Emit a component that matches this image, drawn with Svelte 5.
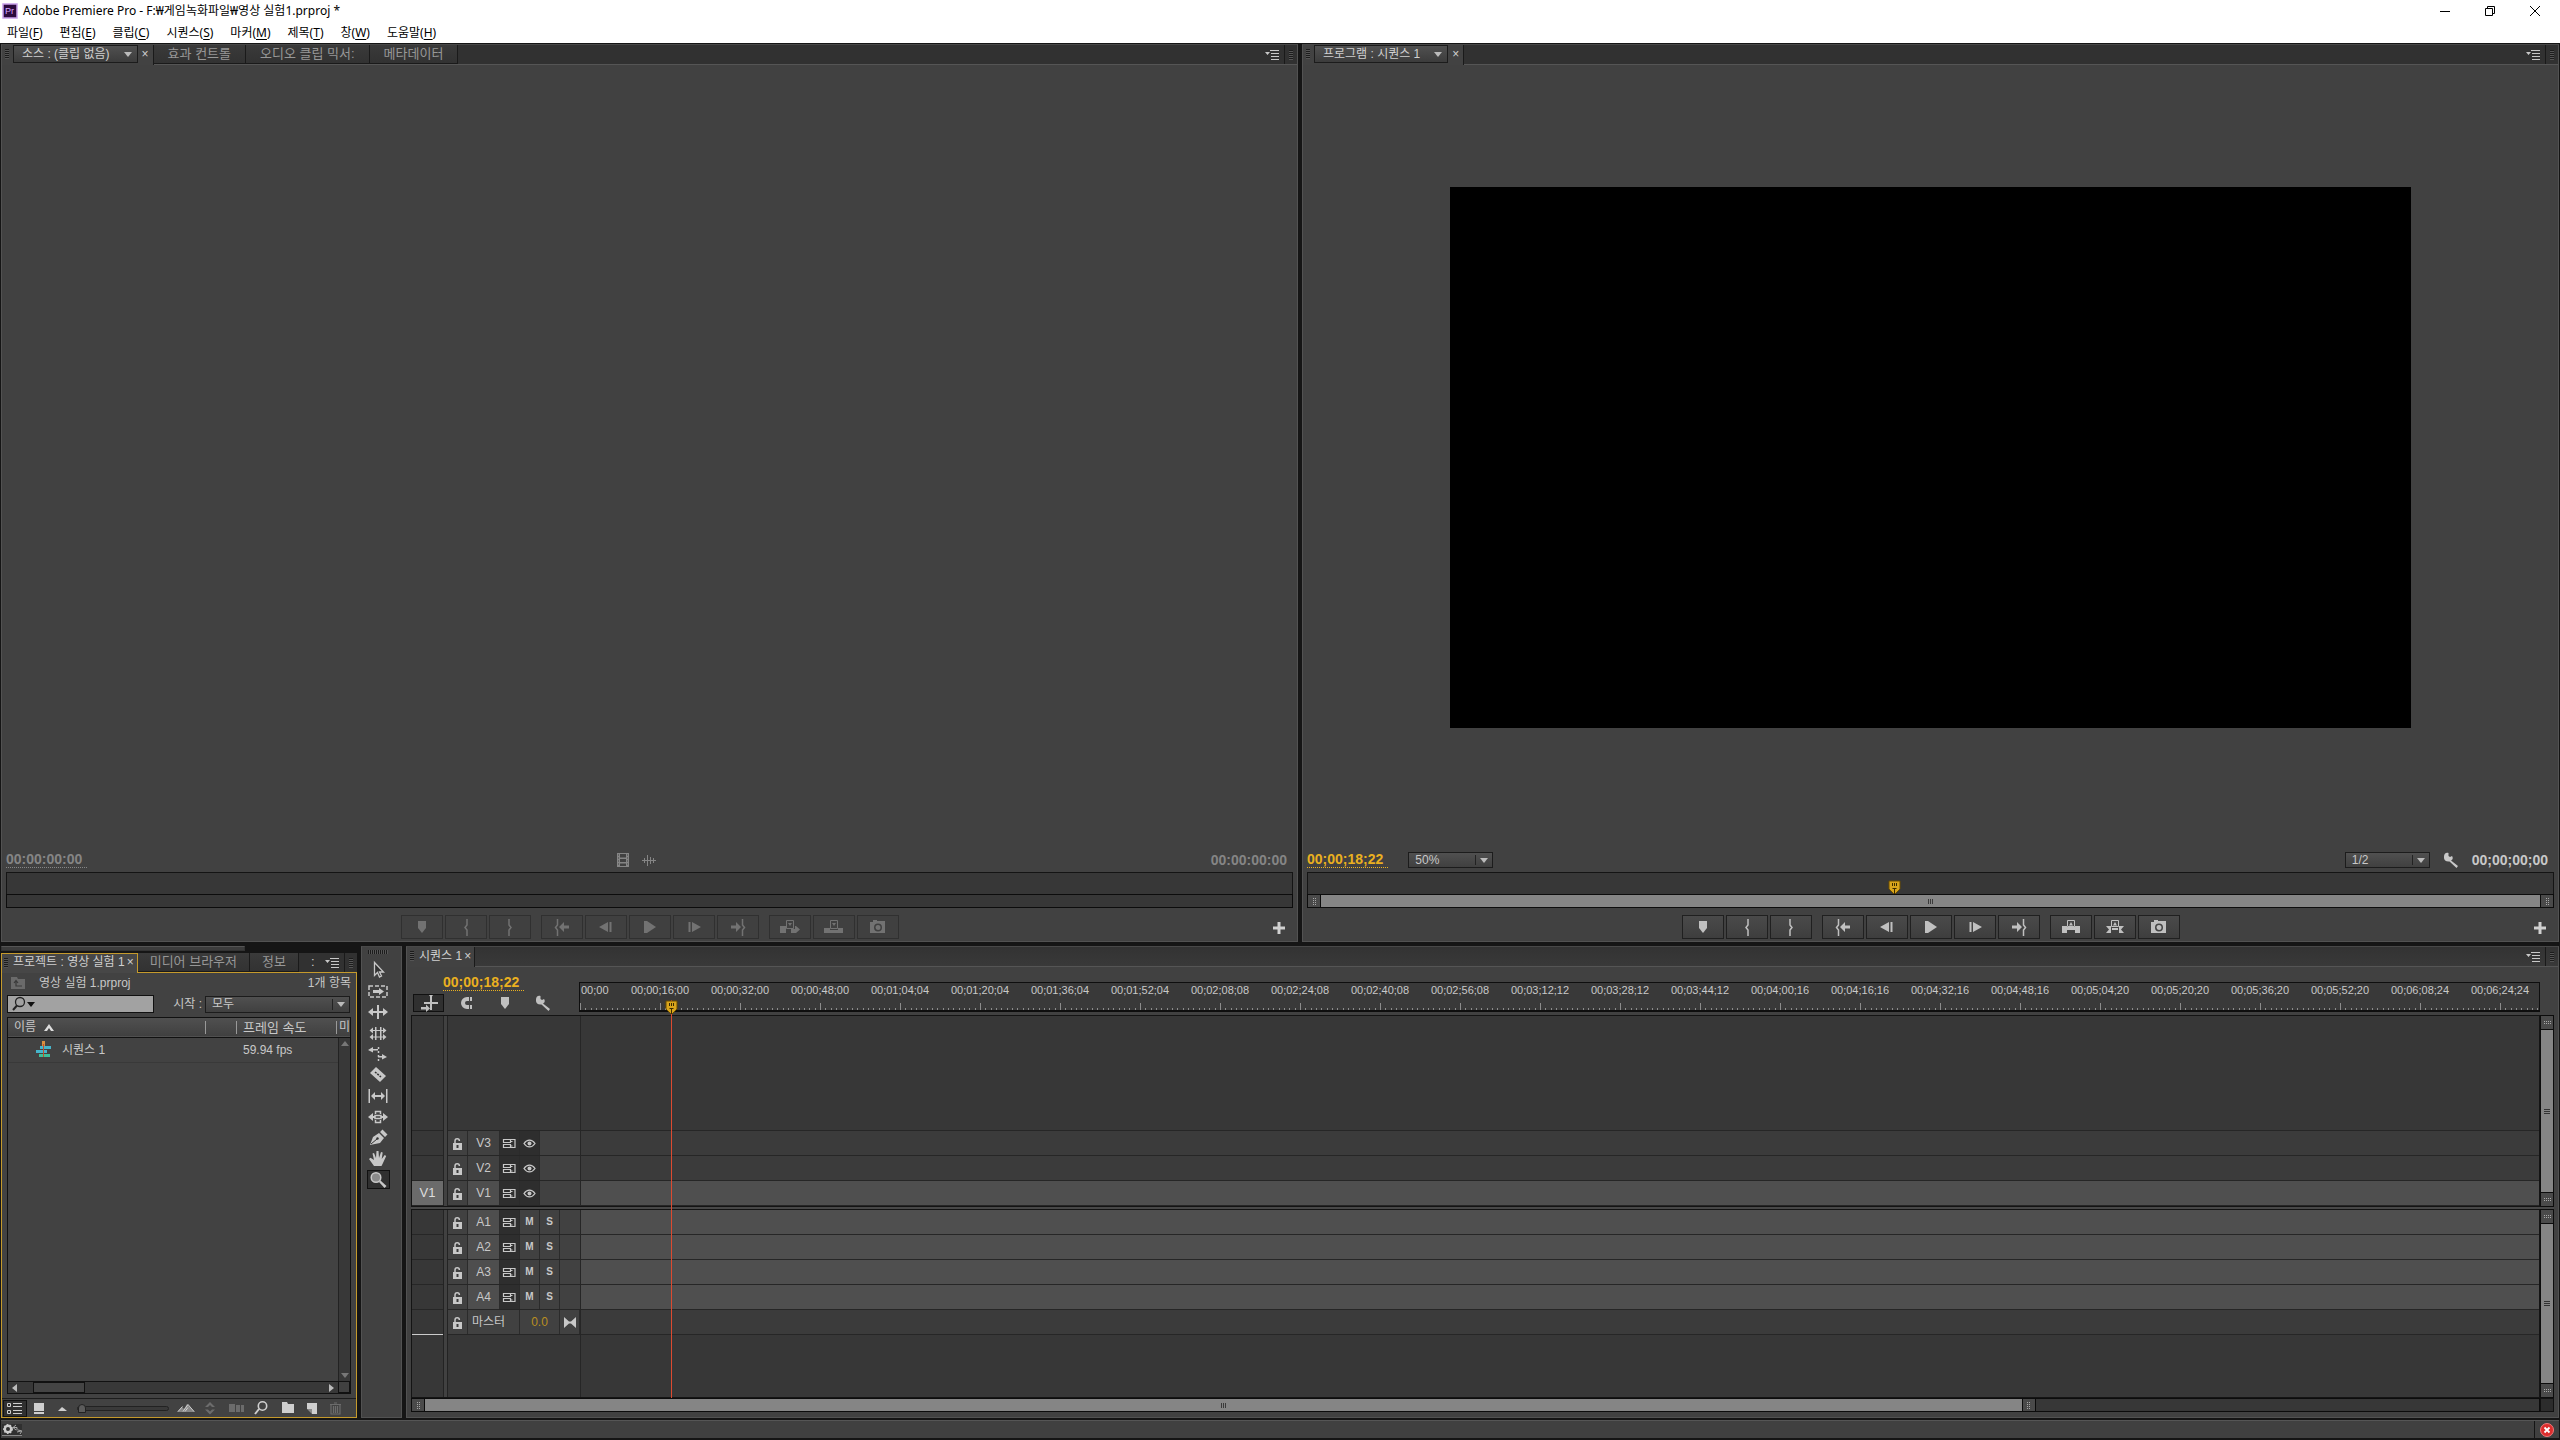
<script>
  const menus = [
    ['파일', 'F'], ['편집', 'E'], ['클립', 'C'], ['시퀀스', 'S'],
    ['마커', 'M'], ['제목', 'T'], ['창', 'W'], ['도움말', 'H'],
  ];

  const icons = {
    marker: '<path d="M7 5h8v7l-4 5-4-5z"/>',
    markIn: '<path d="M12 3v6l-2 2.500 2 2.500v6" fill="none" stroke="currentColor" stroke-width="1.500"/>',
    markOut: '<path d="M10 3v6l2 2.500-2 2.500v6" fill="none" stroke="currentColor" stroke-width="1.500"/>',
    goIn: '<path d="M6.500 3v6l-2 2.500 2 2.500v6" fill="none" stroke="currentColor" stroke-width="1.500"/><path d="M8 11l5-5v3.500h5v3h-5V16z"/>',
    stepBack: '<path d="M13 6v10L4 11zM14.500 6h2v10h-2z"/>',
    play: '<path d="M5 5l3 0 9 6-9 6H5z"/>',
    stepFwd: '<path d="M9 6v10l9-5zM5.500 6h2v10h-2z"/>',
    goOut: '<path d="M15.500 3v6l2 2.500-2 2.500v6" fill="none" stroke="currentColor" stroke-width="1.500"/><path d="M14 11L9 6v3.500H4v3h5V16z"/>',
    insert: '<path d="M1 10h6v7H1zM12 13h4v4h-4z"/><path d="M7.500 4.500h7v8h-7z" fill="none" stroke="currentColor"/><path d="M9 7h4l-2 3zM16 10h1l4 3.500-4 3.500h-1z"/>',
    overwrite: '<path d="M1 12h6v2h8v-2h5v5H1z"/><path d="M7.500 4.500h7v8h-7z" fill="none" stroke="currentColor"/><path d="M9 7h4l-2 3z"/>',
    lift: '<path d="M2 10h5v7H2zM15 10h5v7h-5zM7 11h8v3H7z"/><path d="M7.500 4.500h7v6h-7z" fill="none" stroke="currentColor"/><path d="M9 9.500h4L11 6z"/>',
    extract: '<path d="M2 10h5v7H2l3-3.500zM20 10h-5v7h5l-3-3.500z"/><path d="M7.500 4.500h7v6h-7z" fill="none" stroke="currentColor"/><path d="M9 9.500h4L11 6zM8 12h6v2H8z"/>',
    camera: '<path fill-rule="evenodd" d="M3 6h3V4h4v1h8v12H3zM11 7.500a4 4 0 1 0 0 8 4 4 0 0 0 0-8zm0 1.500a2.500 2.500 0 1 1 0 5 2.500 2.500 0 0 1 0-5z"/>',
    film: '<path fill-rule="evenodd" d="M5 4h12v14H5zm3 1v3.500h6V5zm0 5v3h6v-3zm0 4.500V17h6v-2.500zM6 5.500v1h1v-1zm0 3v1h1v-1zm0 3v1h1v-1zm0 3v1h1v-1zm9-9v1h1v-1zm0 3v1h1v-1zm0 3v1h1v-1zm0 3v1h1v-1z"/>',
    wave: '<path d="M4 11.500h14M6.500 9v5M9.500 6v11M12.500 8v7M15.500 9v5" stroke="currentColor" fill="none"/>',
    wrench: '<path d="M4 7.500C4 5 6 3 8.500 4v3l1.500 1 2-1c1.500 2 .5 4-1 4.500l7 5.500-1.500 2-7-6.500C6 13 4 11 4 9z"/>',
    plus: '<path d="M9.500 5h3v4.500H17v3h-4.500V17h-3v-4.500H5v-3h4.500z"/>',
    panelMenu: '<path d="M3 8h5l-2.500 3zM8 6h9v1H8zM9 9h8v1H9zM9 12h8v1H9zM9 15h8v1H9z"/>',
    select: '<path d="M7.500 3.500v13l3-3 2 4.500 2-1-2-4h4z" fill="#333" stroke="currentColor" stroke-width="1.300"/>',
    trackSelect: '<path d="M2 6h18v11H2z" fill="none" stroke="currentColor" stroke-width="1.500" stroke-dasharray="4 2"/><path d="M6 10h6V8l5 3.500-5 3.500v-2H6z"/>',
    ripple: '<path d="M10 4h2v14h-2zM1 11l5-4v3h10V7l5 4-5 4v-3H6v3z"/>',
    rolling: '<path d="M8 5h1.500v13H8zM13 5h1.500v13H13zM2.500 8.500L6 5.500V8h10V5.500l3.500 3-3.500 3V9H6v2.500zM2.500 15L6 12v2.500h10V12l3.500 3-3.500 3v-2.500H6V18z"/>',
    rate: '<path d="M1 7l5-3v2h5v1.500H6v2zM20 14l-5-3v2h-4v1.500h4v2z"/><path d="M11.500 4v14" stroke="currentColor" stroke-width="1.500" stroke-dasharray="2 2"/>',
    razor: '<path d="M3 9l6-6 10 9-6 6z"/><path d="M8 8l6 5" stroke="#333" stroke-width="1.500" stroke-dasharray="2 1"/>',
    slip: '<path d="M1.500 4h1.500v14H1.500zM19 4h1.500v14H19zM4 11l4-4v3h6V7l4 4-4 4v-3H8v3z"/>',
    slide: '<path d="M1 11l5-4v3h2v2H6v3zM21 11l-5-4v3h-2v2h2v3z"/><path d="M8.500 8V5.500h5V8M8.500 14v2.500h5V14M8 9.500h6v3H8z" fill="none" stroke="currentColor" stroke-width="1.500"/>',
    pen: '<path d="M3 18l3-8 6-4 5 5-4 5zM13 5l2.500-2.500 5 5L18 10z"/><path d="M4 17l6-5" stroke="#333"/><circle cx="10.500" cy="11.500" r="1.200" fill="#333"/>',
    hand: '<path d="M7 18l-5-7 1.500-1.200L7 12 5.500 5.500 7 5l2 5 .5-7h2l.5 7 2-6 1.700.5-1 6.500 3-4 1.500 1-3.200 7-1.500 3z"/>',
    zoom: '<circle cx="9" cy="8.500" r="4.800" fill="#8a8a8a" stroke="currentColor" stroke-width="1.500"/><path d="M12 13l1.500-1.500 6 5.500-2 2z"/>',
    nest: '<path d="M12 4h2v14h-2zM6 10h14v2H6zM3 15h5v-2.500l4 4-4 3.500v-2.500H3z"/><path d="M11 3h4l-2 3z"/>',
    magnet: '<path d="M16 5h-5a6 6 0 0 0 0 12h5v-4h-5a2 2 0 0 1 0-4h5z"/><path d="M13.500 4v6M13.500 12v6" stroke="#444"/>',
    lock: '<path d="M6 11h9v7H6z"/><path d="M8 11V9a2.200 2.200 0 0 1 4.400 0" fill="none" stroke="currentColor" stroke-width="1.500"/><path d="M9.500 13h2v3h-2z" fill="#3a3a3a"/>',
    sync: '<path d="M4.500 7.500h7v3h-7zM4.500 12.500h7v3h-7zM12 7.500h4v8h-4M11.500 9.500h2M11.500 14h2" fill="none" stroke="currentColor" stroke-width="1.200"/>',
    eye: '<path d="M5 11.500c3-4.500 8-4.500 11 0-3 4.500-8 4.500-11 0z" fill="none" stroke="currentColor" stroke-width="1.300"/><circle cx="10.500" cy="11.500" r="2" />',
    bow: '<path d="M5 6l5 4.500h2L17 6v11l-5-4.500h-2L5 17z"/>',
    up: '<path d="M4 5h6l1 2h7v10H4z" fill="#6a6a6a"/><path d="M15 14H9V9.500M7 11l2-2.500 2 2.500" fill="none" stroke="#3a3a3a" stroke-width="1.200"/>',
    sequence: '<path d="M9 2h3v5H9z" fill="#d9903f"/><path d="M7 7h11v3H7zM3 11h11v3H3z" fill="#45b5cc"/><path d="M6 15h11v3H6z" fill="#3dbf9a"/><path d="M10.500 5v13" stroke="#c0532c"/>',
    list: '<path d="M3.500 6.500h3v3h-3zM3.500 13.500h3v3h-3z" fill="none" stroke="currentColor"/><path d="M9 6.500h9M9 9.500h9M9 13.500h9M9 16.500h9" stroke="currentColor"/>',
    thumb: '<path d="M6 6h10v8H6zM6 15h10v2H6z"/>',
    hillS: '<path d="M6 14l4-4 2 1.500 3 2.500z"/>',
    hillL: '<path d="M2 15l5-5 2 2 3-5 8 8z" fill="#888"/><path d="M3 14.500l4.500-5M8 14.500l5-7 6 7M10 14.500l3-4" stroke="currentColor" fill="none"/>',
    sort: '<path d="M6 10l5-5 5 5h-3l-2-2-2 2zM6 12.500l5 5 5-5h-3l-2 2-2-2z" fill="#6c6c6c"/>',
    auto: '<path d="M3 7h6v8H3zM10 8h4v7h-4zM15 8h3v7h-3z" fill="#6c6c6c"/>',
    find: '<circle cx="12.500" cy="9" r="4.200" fill="none" stroke="currentColor" stroke-width="1.600"/><path d="M9 12l-4 5" stroke="currentColor" stroke-width="2"/>',
    folder: '<path d="M5 5h5l1 2h6v9H5z"/>',
    newItem: '<path d="M6 6h10v11h-5v-5H6z"/><path d="M6 12l5 5v-5z" fill="#8a8a8a"/>',
    trash: '<path d="M6 8v9h9V8M8.500 9v7M10.500 9v7M12.500 9v7M5 7.500h11M9 6h3" fill="none" stroke="#6c6c6c" stroke-width="1.200"/>',
    search: '<circle cx="12" cy="9" r="4.500" fill="none" stroke="#222" stroke-width="1.300"/><path d="M9 12.500L5 17" stroke="#222" stroke-width="2"/>',
    gear: '<circle cx="6" cy="11" r="3.200" fill="none" stroke="currentColor" stroke-width="2.400"/><circle cx="6" cy="11" r="4.200" fill="none" stroke="currentColor" stroke-width="1.500" stroke-dasharray="1.500 1.500"/><path d="M14 7l-3 2.500 3 2.500M11 9.500h4v3M18 16l2-3-4-1M19 13l-4 1" fill="none" stroke="#aaa"/>',
  };

  const transport = (a, b) => [
    [['마커 추가', 'marker'], ['시작 표시', 'markIn'], ['종료 표시', 'markOut']],
    [['시작으로 이동', 'goIn'], ['이전 프레임', 'stepBack'], ['재생', 'play'], ['다음 프레임', 'stepFwd'], ['종료로 이동', 'goOut']],
    [a, b, ['프레임 내보내기', 'camera']],
  ];
  const sourceButtons = transport(['삽입', 'insert'], ['덮어쓰기', 'overwrite']);
  const programButtons = transport(['제거', 'lift'], ['추출', 'extract']);

  const tools = [
    ['선택 도구', 'select'], ['트랙 선택 도구', 'trackSelect'], ['잔물결 편집 도구', 'ripple'],
    ['롤링 편집 도구', 'rolling'], ['속도 조정 도구', 'rate'], ['자르기 도구', 'razor'],
    ['밀어넣기 도구', 'slip'], ['밀기 도구', 'slide'], ['펜 도구', 'pen'], ['손 도구', 'hand'],
    ['확대/축소 도구', 'zoom'],
  ];

  // Drop-frame labels, one every 16 seconds at 59.94 fps.
  const pad = (n) => String(n).padStart(2, '0');
  const labels = Array.from({ length: 25 }, (_, i) => {
    if (i === 0) return '00;00';
    const s = i * 16;
    const m = Math.floor(s / 60);
    return `00;${pad(m)};${pad(s % 60)};${pad(m * 4)}`;
  });
  const ticks = Array.from({ length: 15 }, (_, i) => i - 7)
    .map((i) => `M${40 + Math.round((i * 16) / 3)} ${i === 0 ? 0 : 5}h1v8h-1z`)
    .join('');
  const playhead = 92;

  const video = ['V3', 'V2', 'V1'];
  const audio = ['A1', 'A2', 'A3', 'A4'];
</script>

{#snippet icon(name)}
  <svg class="icon" width="22" height="22" viewBox="0 0 22 22" fill="currentColor" aria-hidden="true">{@html icons[name]}</svg>
{/snippet}

{#snippet dots(turned)}
  <i class="end" class:turned>
    <svg width="5" height="7" viewBox="0 0 5 7" aria-hidden="true"><path d="M1 0h1v1H1zM3 0h1v1H3zM1 2h1v1H1zM3 2h1v1H3zM1 4h1v1H1zM3 4h1v1H3zM1 6h1v1H1zM3 6h1v1H3z" fill="#a8a8a8" /></svg>
  </i>
{/snippet}

{#snippet buttons(groups, off)}
  <div class="transport" class:off>
    {#each groups as group}
      <div class="group">
        {#each group as [label, name]}
          <button class="tbtn" aria-label={label} disabled={off}>{@render icon(name)}</button>
        {/each}
      </div>
    {/each}
    <button class="add" aria-label="단추 편집기">{@render icon('plus')}</button>
  </div>
{/snippet}

{#snippet headMarker()}
  <svg class="head" width="13" height="14" viewBox="0 0 13 14" aria-hidden="true">
    <path d="M1 1h11v8l-5 5h-1L1 9z" fill="#d9a51c" stroke="#6a4c00" />
    <path d="M4.500 3v3M6.500 3v3M8.500 3v3M4.500 8.500h4M6.500 9v5" stroke="#3a2a00" />
  </svg>
{/snippet}

{#snippet tail()}
  <div class="tail">
    <button class="plain" aria-label="패널 메뉴">{@render icon('panelMenu')}</button>
    <span class="gripbox"><i class="grip"></i></span>
  </div>
{/snippet}

<div class="app">
  <header>
    <div class="title">
      <svg width="16" height="16" viewBox="0 0 16 16" aria-hidden="true">
        <rect x="1" y="1" width="14" height="14" fill="#2b0a3d" stroke="#c9a0ea" stroke-width="1.500" />
        <text x="3" y="11" font-size="9" font-family="Liberation Sans, sans-serif" fill="#d9a6ff">Pr</text>
      </svg>
      <h1>Adobe Premiere Pro - F:₩게임녹화파일₩영상 실험1.prproj *</h1>
      <div class="win">
        <button aria-label="최소화"><svg width="12" height="12" viewBox="0 0 12 12"><path d="M1 6.500h10" stroke="#000" /></svg></button>
        <button aria-label="이전 크기로"><svg width="12" height="12" viewBox="0 0 12 12" fill="none" stroke="#000"><path d="M1.500 3.500h7v7h-7zM3.500 3.500v-2h7v7h-2" /></svg></button>
        <button aria-label="닫기"><svg width="12" height="12" viewBox="0 0 12 12"><path d="M1 1l10 10M11 1L1 11" stroke="#000" /></svg></button>
      </div>
    </div>
    <nav>
      {#each menus as [name, key]}
        <button>{name}(<u>{key}</u>)</button>
      {/each}
    </nav>
  </header>

  <main>
    <div class="upper">
      <section class="panel monitor">
        <div class="tabs">
          <div class="tab active">
            <i class="grip"></i>
            <button class="combo">소스 : (클립 없음)<span class="arrow"></span></button>
            <button class="x" aria-label="탭 닫기">×</button>
          </div>
          <button class="tab">효과 컨트롤</button>
          <button class="tab">오디오 클립 믹서:</button>
          <button class="tab">메타데이터</button>
          {@render tail()}
        </div>
        <div class="view"></div>
        <div class="info off">
          <button class="tc">00:00:00:00</button>
          <div class="drag">{@render icon('film')}{@render icon('wave')}</div>
          <span class="dur">00:00:00:00</span>
        </div>
        <div class="scrub"></div>
        <div class="zoombar"></div>
        {@render buttons(sourceButtons, true)}
      </section>

      <section class="panel monitor">
        <div class="tabs">
          <div class="tab active">
            <i class="grip"></i>
            <button class="combo">프로그램 : 시퀀스 1<span class="arrow"></span></button>
            <button class="x" aria-label="탭 닫기">×</button>
          </div>
          {@render tail()}
        </div>
        <div class="view"><div class="frame"></div></div>
        <div class="info">
          <button class="tc gold">00;00;18;22</button>
          <label class="select fit"><select aria-label="확대/축소 레벨"><option>50%</option></select></label>
          <div class="right">
            <label class="select res"><select aria-label="재생 해상도"><option>1/2</option></select></label>
            <button class="plain" aria-label="설정">{@render icon('wrench')}</button>
            <span class="dur">00;00;00;00</span>
          </div>
        </div>
        <div class="scrub"><span class="pos">{@render headMarker()}</span></div>
        <div class="zoombar">
          {@render dots(false)}<div class="thumb"><i class="ridge"></i></div>{@render dots(false)}
        </div>
        {@render buttons(programButtons, false)}
      </section>
    </div>

    <div class="lower">
      <div class="projwrap">
        <div class="minibar"></div>
        <section class="project">
          <div class="tabs ptabs">
            <div class="tab active"><i class="grip"></i><button class="name">프로젝트 : 영상 실험 1</button><button class="x" aria-label="탭 닫기">×</button></div>
            <button class="tab">미디어 브라우저</button>
            <button class="tab">정보</button>
            <span class="more">:</span>
            {@render tail()}
          </div>
          <div class="pbody">
            <div class="file">{@render icon('up')}<span>영상 실험 1.prproj</span><span class="count">1개 항목</span></div>
            <div class="filter">
              <div class="search">{@render icon('search')}<span class="tri"></span><input type="text" aria-label="검색" /></div>
              <label class="in" for="scope">시작 :</label>
              <span class="select scope"><select id="scope"><option>모두</option></select></span>
            </div>
            <div class="list">
              <table>
                <colgroup><col class="c1" /><col class="c2" /><col class="c3" /><col class="c4" /></colgroup>
                <thead>
                  <tr><th>이름 <svg width="12" height="8" viewBox="0 0 12 8" aria-hidden="true"><path d="M1 8l5-7 5 7H8L6 5 4 8z" fill="#ddd" /></svg></th><th></th><th>프레임 속도</th><th>미</th></tr>
                </thead>
                <tbody>
                  <tr><td><span class="item">{@render icon('sequence')}시퀀스 1</span></td><td></td><td>59.94 fps</td><td></td></tr>
                </tbody>
              </table>
              <div class="vrail"><i class="au"></i><i class="ad"></i></div>
              <div class="hrail"><i class="al"></i><i class="hthumb"></i><i class="ar"></i></div>
              <div class="corner"></div>
            </div>
            <div class="foot">
              <button class="on" aria-label="목록 보기">{@render icon('list')}</button>
              <button aria-label="아이콘 보기">{@render icon('thumb')}</button>
              <button aria-label="축소">{@render icon('hillS')}</button>
              <input type="range" min="0" max="100" value="0" aria-label="확대/축소" />
              <button aria-label="확대">{@render icon('hillL')}</button>
              <button aria-label="정렬">{@render icon('sort')}</button>
              <button class="gap" aria-label="시퀀스 자동화">{@render icon('auto')}</button>
              <button aria-label="찾기">{@render icon('find')}</button>
              <button class="gap" aria-label="새 저장소">{@render icon('folder')}</button>
              <button aria-label="새 항목">{@render icon('newItem')}</button>
              <button aria-label="지우기">{@render icon('trash')}</button>
            </div>
          </div>
        </section>
      </div>

      <section class="panel tools">
        <i class="hgrip"></i>
        {#each tools as [label, name]}
          <button class:on={name === 'zoom'} aria-label={label}>{@render icon(name)}</button>
        {/each}
      </section>

      <section class="panel timeline">
        <div class="tabs ttabs">
          <div class="tab active"><i class="grip"></i><button class="name">시퀀스 1</button><button class="x" aria-label="탭 닫기">×</button></div>
          {@render tail()}
        </div>
        <div class="tgrid">
          <div class="thead">
            <button class="tc gold">00;00;18;22</button>
            <div class="topts">
              <button class="on" aria-label="중첩">{@render icon('nest')}</button>
              <button aria-label="스냅">{@render icon('magnet')}</button>
              <button aria-label="마커 추가">{@render icon('marker')}</button>
              <button aria-label="타임라인 표시 설정">{@render icon('wrench')}</button>
            </div>
          </div>
          <div class="ruler">
            <div class="cells">
              {#each labels as label}
                <div class="cell"><span>{label}</span><svg width="80" height="8" viewBox="0 0 80 8" aria-hidden="true"><path d={ticks} fill="#8c8c8c" /></svg></div>
              {/each}
            </div>
          </div>

          <div class="tracks vid">
            <div class="row blank"><div></div><div class="strip"></div><div></div><div class="lane"></div></div>
            {#each video as name}
              <div class="row" class:lit={name === 'V1'}>
                <div class="patch" class:src={name === 'V1'}>{name === 'V1' ? 'V1' : ''}</div>
                <div class="strip"></div>
                <div class="ctl">
                  <button class="c lock" aria-label="트랙 잠금">{@render icon('lock')}</button>
                  <button class="c name">{name}</button>
                  <button class="c dark" aria-label="동기화 잠금">{@render icon('sync')}</button>
                  <button class="c dark" aria-label="트랙 출력">{@render icon('eye')}</button>
                </div>
                <div class="lane"></div>
              </div>
            {/each}
          </div>
          <div class="vscroll v1">{@render dots(true)}<b></b>{@render dots(true)}</div>
          <div class="split"></div>
          <div class="tracks aud">
            {#each audio as name}
              <div class="row lit">
                <div class="patch"></div>
                <div class="strip"></div>
                <div class="ctl">
                  <button class="c lock" aria-label="트랙 잠금">{@render icon('lock')}</button>
                  <button class="c name">{name}</button>
                  <button class="c dark" aria-label="동기화 잠금">{@render icon('sync')}</button>
                  <button class="c ms">M</button>
                  <button class="c ms">S</button>
                </div>
                <div class="lane"></div>
              </div>
            {/each}
            <div class="row">
              <div class="patch last"></div>
              <div class="strip"></div>
              <div class="ctl">
                <button class="c lock" aria-label="트랙 잠금">{@render icon('lock')}</button>
                <span class="c master">마스터</span>
                <button class="c vol">0.0</button>
                <button class="c" aria-label="접기">{@render icon('bow')}</button>
              </div>
              <div class="lane"></div>
            </div>
            <div class="row blank"><div></div><div class="strip"></div><div></div><div class="lane"></div></div>
          </div>
          <div class="vscroll v2">{@render dots(true)}<b></b>{@render dots(true)}</div>
          <div class="hscroll">{@render dots(false)}<div class="thumb"><i class="ridge"></i></div>{@render dots(false)}<span class="rest"></span></div>
          <div class="corner"></div>
          <div class="over"><div class="ph" style="left: {playhead}px">{@render headMarker()}</div></div>
        </div>
      </section>
    </div>
  </main>

  <footer>
    <button class="sync" aria-label="동기화 설정">{@render icon('gear')}</button>
    <button class="err" aria-label="오류">
      <svg width="14" height="14" viewBox="0 0 14 14"><circle cx="7" cy="7" r="6.500" fill="#dc2d2d" stroke="#f07a7a" /><path d="M4.500 4.500l5 5M9.500 4.500l-5 5" stroke="#fff" stroke-width="1.800" /></svg>
    </button>
  </footer>
</div>

<style>
  :global(body) { background: #151515; }
  * { box-sizing: border-box; }
  .app {
    height: 100vh; display: flex; flex-direction: column; overflow: hidden;
    font: 13px/16px "Liberation Sans", "Noto Sans CJK KR", sans-serif; color: #c8c8c8;
    background: #151515;
  }
  button { font: inherit; color: inherit; background: none; border: 0; padding: 0; margin: 0; white-space: nowrap; }
  button:disabled { color: inherit; }
  select, input { font: inherit; color: inherit; }
  svg { display: block; flex: none; }
  section { min-width: 0; min-height: 0; }

  header { background: #fff; color: #000; font: 12px/16px "Noto Sans", "Noto Sans CJK KR", sans-serif; }
  .title { display: flex; align-items: center; height: 22px; padding-left: 2px; gap: 5px; }
  h1 { font: inherit; margin: 0; flex: 1; }
  .win { display: flex; gap: 33px; padding-right: 19px; }
  nav { display: flex; gap: 17px; height: 21px; padding-left: 7px; }
  u { text-underline-offset: 2px; }

  main { flex: 1; min-height: 0; display: flex; flex-direction: column; gap: 4px; padding: 1px 1px 0; }
  .upper { flex: 1; min-height: 0; display: grid; grid-template-columns: 1297fr 1257fr; gap: 4px; }
  .lower { height: 472px; display: grid; grid-template-columns: 356px 41px 1fr; gap: 4px; }
  .panel { background: #414141; border: 1px solid #525252; border-top-color: #484848; display: flex; flex-direction: column; }

  .tabs { display: flex; height: 20px; background: #313131; border-bottom: 1px solid #555; font-size: 13px; line-height: 17px; flex: none; }
  .tab { display: flex; align-items: center; padding: 0 14px 2px; border: 1px solid #1a1a1a; border-width: 0 1px 1px 0; color: #979797; background: linear-gradient(#3a3a3a, #323232); }
  .tab.active { color: #d0d0d0; font-size: 12px; background: #424242; border-bottom: 0; margin-bottom: -1px; padding: 0 4px 2px 3px; }
  .grip { width: 4px; height: 10px; flex: none; background: repeating-linear-gradient(#1c1c1c 0 1px, #555 1px 2px); }
  .combo { display: flex; align-items: center; height: 18px; margin-left: 4px; padding: 0 5px 0 8px; border: 1px solid #1c1c1c; background: linear-gradient(#505050, #3c3c3c); }
  .arrow { border: 4px solid transparent; border-width: 5px 4px 0; border-top-color: #bbb; margin-left: 14px; }
  .x { margin-left: 4px; }
  .name { margin-left: 5px; }
  .tail { margin-left: auto; display: flex; align-items: center; }
  .gripbox { display: flex; align-items: center; height: 100%; padding: 0 4px; border-left: 1px solid #1a1a1a; }

  .view { flex: 1; min-height: 0; display: flex; align-items: center; justify-content: center; padding-top: 2px; }
  .frame { width: 76.5%; aspect-ratio: 16 / 9; background: #000; }
  .info { display: flex; align-items: center; height: 24px; padding: 0 10px 0 4px; }
  .tc { font-weight: bold; font-size: 14px; line-height: 15px; padding-right: 5px; border-bottom: 1px dotted currentColor; }
  .dur { font-weight: bold; font-size: 14px; color: #c8c8c8; }
  .gold { color: #eab020; }
  .off, .off .dur { color: #858585; }
  .drag { display: flex; gap: 4px; margin: 0 auto; padding-right: 26px; }
  .fit { width: 85px; margin-left: 20px; }
  .res { width: 85px; }
  .right { margin-left: auto; display: flex; align-items: center; gap: 10px; }
  .select { position: relative; display: block; }
  .select select { appearance: none; display: block; width: 100%; height: 16px; padding: 0 20px 0 6px; line-height: 13px; font-size: 12px; border: 1px solid #1c1c1c; border-radius: 0; background: linear-gradient(#505050, #404040); color: #c8c8c8; }
  .select::before { content: ""; position: absolute; right: 17px; top: 3px; bottom: 3px; width: 1px; background: #222; }
  .select::after { content: ""; position: absolute; right: 5px; top: 6px; border: 4px solid transparent; border-width: 5px 4px 0; border-top-color: #bbb; }
  .scrub { height: 22px; margin: 0 4px; border: 1px solid #141414; border-bottom: 0; background: #373737; position: relative; flex: none; }
  .pos { position: absolute; left: 46.6%; bottom: 0; }
  .zoombar { height: 14px; margin: 0 4px; border: 1px solid #0c0c0c; background: #373737; display: flex; flex: none; }
  .end { width: 12px; flex: none; display: flex; align-items: center; justify-content: center; background: #4a4a4a; }
  .end.turned { width: auto; height: 13px; }
  .turned svg { transform: rotate(90deg); }
  .thumb { flex: 1; background: #858585; border: solid #0c0c0c; border-width: 0 1px; display: flex; align-items: center; justify-content: center; }
  .ridge { width: 5px; height: 5px; background: repeating-linear-gradient(90deg, #3a3a3a 0 1px, transparent 1px 2px); }
  .transport { position: relative; display: flex; justify-content: center; gap: 10px; padding: 7px 0 1px; height: 33px; flex: none; }
  .group { display: flex; gap: 2px; }
  .tbtn { width: 42px; height: 24px; display: flex; align-items: center; justify-content: center; border: 1px solid #202020; background: linear-gradient(#4a4a4a, #3e3e3e); color: #c0c0c0; }
  .off .tbtn { border-color: #303030; background: #404040; color: #727272; }
  .add { position: absolute; right: 7px; top: 9px; color: #d0d0d0; }

  .projwrap { display: flex; flex-direction: column; min-width: 0; }
  .minibar { width: 244px; height: 5px; border: 1px solid #333; border-top-color: #555; background: #3c3c3c; margin-bottom: 2px; }
  .project { flex: 1; display: flex; flex-direction: column; }
  .ptabs { height: 19px; border-bottom: 0; background: #313131; }
  .ptabs .tab.active { border: 1px solid #c59a2c; border-bottom: 0; padding: 0 3px 2px 2px; background: #474747; z-index: 1; }
  .ptabs .tab.active .x { margin-left: 2px; }
  .ptabs .tab:not(.active) { padding: 0 12px 2px; }
  .more { margin-left: 12px; }
  .pbody { flex: 1; min-height: 0; display: flex; flex-direction: column; border: 1px solid #c59a2c; background: #424242; }
  .file { display: flex; align-items: center; height: 20px; padding: 0 5px; font-size: 12px; gap: 10px; }
  .count { margin-left: auto; }
  .filter { display: flex; align-items: center; height: 22px; padding: 0 6px 0 5px; margin-bottom: 2px; }
  .search { display: flex; align-items: center; width: 147px; height: 18px; border: 1px solid #111; background: #a2a2a2; }
  .search input { flex: 1; min-width: 0; border: 0; background: none; outline: 0; padding: 0; }
  .tri { border: 4px solid transparent; border-width: 5px 4px 0; border-top-color: #111; margin-left: -3px; }
  .in { margin: 0 3px 0 auto; font-size: 12px; }
  .scope { width: 145px; }
  .scope select { height: 17px; }
  .list { flex: 1; min-height: 0; margin: 0 5px; border: 1px solid #111; display: grid; grid-template: 1fr 12px / 1fr 12px; }
  table { grid-column: 1 / 3; grid-row: 1; width: 100%; border-collapse: collapse; table-layout: fixed; align-self: start; }
  .c1 { width: 198px; } .c2 { width: 31px; } .c3 { width: 100px; }
  thead tr { height: 19px; background: linear-gradient(#505050, #404040); border-bottom: 1px solid #111; }
  th, td { font-weight: normal; text-align: left; padding: 0 0 0 6px; overflow: hidden; white-space: nowrap; }
  th { line-height: 17px; font-size: 13px; background: linear-gradient(#999, #999) right center / 1px 13px no-repeat; }
  th:first-child { font-size: 12px; }
  th:last-child { background: none; padding-left: 2px; font-size: 12px; }
  th svg { display: inline-block; margin-left: 4px; }
  tbody tr { height: 25px; border-bottom: 1px solid #393939; font-size: 12px; }
  .item { display: flex; align-items: center; gap: 7px; padding-left: 19px; }
  .vrail { grid-column: 2; grid-row: 1; margin-top: 20px; background: #383838; border-left: 1px solid #222; display: flex; flex-direction: column; justify-content: space-between; align-items: center; padding: 3px 0; }
  .au, .ad, .al, .ar { border: 4px solid transparent; flex: none; }
  .au { border-width: 0 4px 5px; border-bottom-color: #777; }
  .ad { border-width: 5px 4px 0; border-top-color: #777; }
  .al { border-width: 4px 5px 4px 0; border-right-color: #bbb; }
  .ar { border-width: 4px 0 4px 5px; border-left-color: #bbb; margin-left: auto; }
  .hrail { display: flex; align-items: center; background: #383838; border-top: 1px solid #111; padding: 0 4px; }
  .hthumb { width: 52px; height: 11px; border: 1px solid #111; background: #444; margin-left: 16px; }
  .corner { border: 1px solid #111; background: #404040; }
  .foot { display: flex; align-items: center; height: 19px; margin-top: 4px; border-top: 1px solid #1c1c1c; padding: 0 0 0 1px; color: #cfcfcf; }
  .foot button { width: 24px; height: 17px; display: flex; align-items: center; flex: none; justify-content: center; }
  .foot .on, .topts .on, .tools .on { border: 1px solid #111; background: #303030; }
  .foot .gap { margin-left: 3px; }
  .foot input { appearance: none; flex: none; width: 92px; height: 5px; margin: 0 5px 0 2px; border: 1px solid #222; border-radius: 3px; background: #3a3a3a; }
  .foot input::-webkit-slider-thumb { appearance: none; width: 8px; height: 9px; background: #5c5c5c; border: 1px solid #222; border-radius: 4px 4px 0 0; }

  .tools { align-items: center; padding-right: 7px; }
  .hgrip { width: 20px; height: 4px; margin: 3px 0 6px; background: repeating-linear-gradient(90deg, #1c1c1c 0 1px, #555 1px 2px); flex: none; }
  .tools button { width: 23px; height: 19px; margin-bottom: 2px; display: flex; align-items: center; justify-content: center; flex: none; }

  .ttabs { background: linear-gradient(#333, #393939); }
  .ttabs .tab.active { padding-right: 3px; }
  .ttabs .x { margin-left: 2px; }
  .tgrid { flex: 1; min-height: 0; display: grid; grid-template-columns: 168px 1fr 14px; grid-template-rows: 48px 192px 2px 1fr 14px; margin: 0 4px 5px; }
  .thead { grid-column: 1; grid-row: 1; padding: 8px 0 0 2px; }
  .thead .tc { display: block; margin-left: 30px; }
  .topts { display: flex; align-items: center; gap: 7px; margin-top: 3px; color: #c0c0c0; }
  .topts button { width: 31px; height: 18px; display: flex; align-items: center; justify-content: center; }
  .ruler { grid-column: 2; grid-row: 1; margin: 15px 0 3px; border: 1px solid #0e0e0e; border-width: 1px 1px 2px; background: #393939; overflow: hidden; font-size: 11px; line-height: 15px; min-width: 0; }
  .cells { display: flex; margin-left: -40px; }
  .cell { flex: none; width: 80px; height: 28px; display: flex; flex-direction: column; justify-content: space-between; align-items: center; }
  .cell svg { overflow: visible; }
  .cell:first-child span { padding-left: 41px; align-self: flex-start; }
  .tracks { grid-column: 1 / 3; display: flex; flex-direction: column; border: 1px solid #141414; background: #373737; min-height: 0; }
  .vid { grid-row: 2; } .aud { grid-row: 4; }
  .row { display: grid; grid-template-columns: 31px 5px 132px 1fr; height: 25px; flex: none; font-size: 12px; }
  .row.blank { flex: 1; height: auto; }
  .row > div { border-bottom: 1px solid #262626; }
  .row > .strip { background: #414141; border: solid #232323; border-width: 0 1px; }
  .aud .blank > div { border-bottom: 0; }
  .lane { border-left: 1px solid #262626; background: #3b3b3b; }
  .blank .lane { background: #373737; }
  .lit .lane { background: #4f4f4f; }
  .patch { display: flex; align-items: center; justify-content: center; font-size: 13px; }
  .src { background: #6b6b6b; color: #ddd; }
  .row > .last { border-bottom: 1px solid #ccc; }
  .ctl { display: flex; background: #414141; }
  .c { width: 20px; height: 100%; display: flex; align-items: center; justify-content: center; border-right: 1px solid #2b2b2b; flex: none; overflow: hidden; }
  .c.name { width: 32px; margin: 0; font-size: 12px; }
  .lit .c.name { background: #4e4e4e; }
  .dark { background: #2e2e2e; }
  .ms { font: bold 10px/12px "Liberation Sans", sans-serif; }
  .master { width: 52px; font-size: 12px; justify-content: flex-start; padding-left: 4px; }
  .vol { width: 40px; color: #b98f22; font-size: 12px; }
  .vscroll { grid-column: 3; border: 1px solid #0c0c0c; display: flex; flex-direction: column; background: #858585; min-height: 0; }
  .v1 { grid-row: 2; } .v2 { grid-row: 4; }
  .vscroll b { flex: 1; border: solid #0c0c0c; border-width: 1px 0; background: repeating-linear-gradient(#333 0 1px, transparent 1px 2px) center / 6px 5px no-repeat; }
  .split { grid-column: 1 / 4; grid-row: 3; background: #484848; }
  .hscroll { grid-column: 1 / 3; grid-row: 5; border: 1px solid #0c0c0c; display: flex; background: #373737; }
  .hscroll .thumb { flex: 1600; }
  .rest { flex: 504; border-left: 1px solid #0c0c0c; }
  .tgrid > .corner { grid-column: 3; grid-row: 5; background: #2c2c2c; }
  .over { grid-column: 2; grid-row: 1 / 5; position: relative; pointer-events: none; overflow: hidden; }
  .ph { position: absolute; top: 33px; bottom: 0; width: 1px; background: #dc4a30; }
  .ph .head { position: relative; left: -6px; }

  footer { height: 18px; display: flex; align-items: center; justify-content: space-between; margin: 2px 1px; background: #404040; border-top: 1px solid #555; flex: none; }
  .sync { background: #303030; border-bottom: 1px solid #888; margin-left: 1px; height: 12px; width: 20px; overflow: hidden; display: flex; align-items: center; color: #ccc; }
  .err { padding: 0 5px; border-left: 1px solid #151515; height: 100%; }
</style>
